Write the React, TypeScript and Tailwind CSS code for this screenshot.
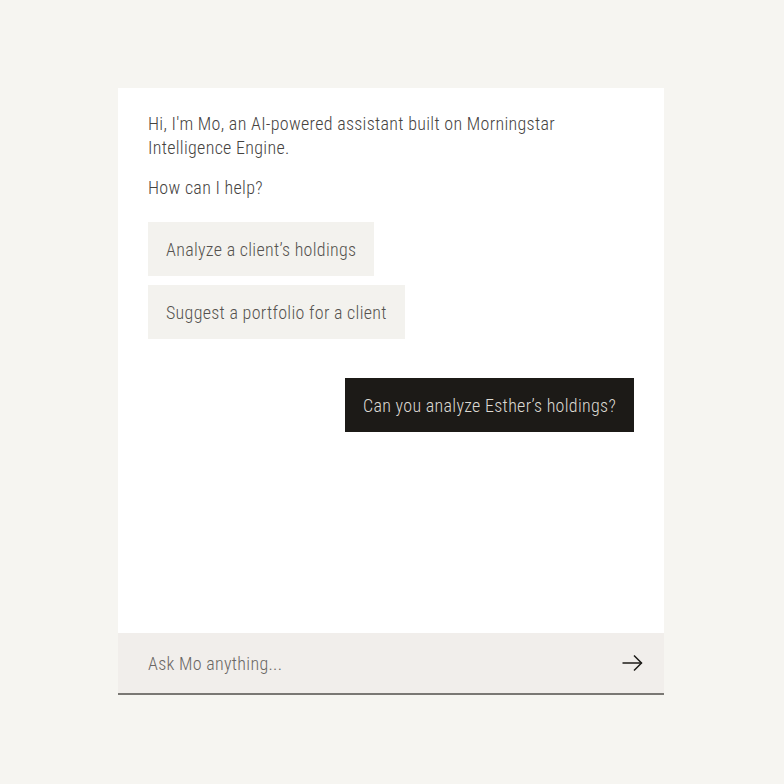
const font = {
  fontFamily:
    '"Roboto Condensed", "Liberation Sans Narrow", "DejaVu Sans Condensed", Roboto, sans-serif',
};

const suggestions = ["Analyze a client\u2019s holdings", "Suggest a portfolio for a client"];

export default function App() {
  return (
    <div className="min-h-[784px] w-full bg-[#f6f5f1] pl-[118px] pt-[88px] tracking-[0.3px]" style={font}>
      <div className="flex h-[607px] w-[546px] flex-col bg-white">
        <div className="flex flex-1 flex-col px-[30px] pt-[24px]">
          <p className="max-w-[440px] text-[18px] font-light leading-[24px] text-[#46433f]">
            Hi, I'm Mo, an AI-powered assistant built on Morningstar Intelligence Engine.
          </p>
          <p className="mt-[16px] text-[18px] font-light leading-[24px] text-[#46433f]">How can I help?</p>
          <div className="mt-[22px] flex flex-col items-start gap-[9px]">
            {suggestions.map((s) => (
              <button
                key={s}
                type="button"
                className="h-[54px] bg-[#f3f2ee] px-[18px] text-[18px] font-light tracking-[0.3px] text-[#55524f]"
              >
                {s}
              </button>
            ))}
          </div>
          <div className="mt-[39px] flex justify-end">
            <div className="flex h-[54px] items-center bg-[#1c1a17] px-[18px] text-[18px] font-light text-[#dcd9d3]">
              Can you analyze Esther’s holdings?
            </div>
          </div>
        </div>
        <div className="flex h-[62px] items-center border-b-2 border-[#7a7874] bg-[#f1eeeb] pl-[30px] pr-[21px]">
          <input
            placeholder="Ask Mo anything..."
            className="flex-1 bg-transparent text-[18px] font-light tracking-[0.3px] text-[#3a3835] outline-none placeholder:text-[#6a6764]"
          />
          <svg width="21" height="18" viewBox="0 0 21 18" fill="none" stroke="#1c1a17" strokeWidth="1.5">
            <path d="M0.5 9H19.5" />
            <path d="M12 1.5L19.5 9L12 16.5" />
          </svg>
        </div>
      </div>
    </div>
  );
}
